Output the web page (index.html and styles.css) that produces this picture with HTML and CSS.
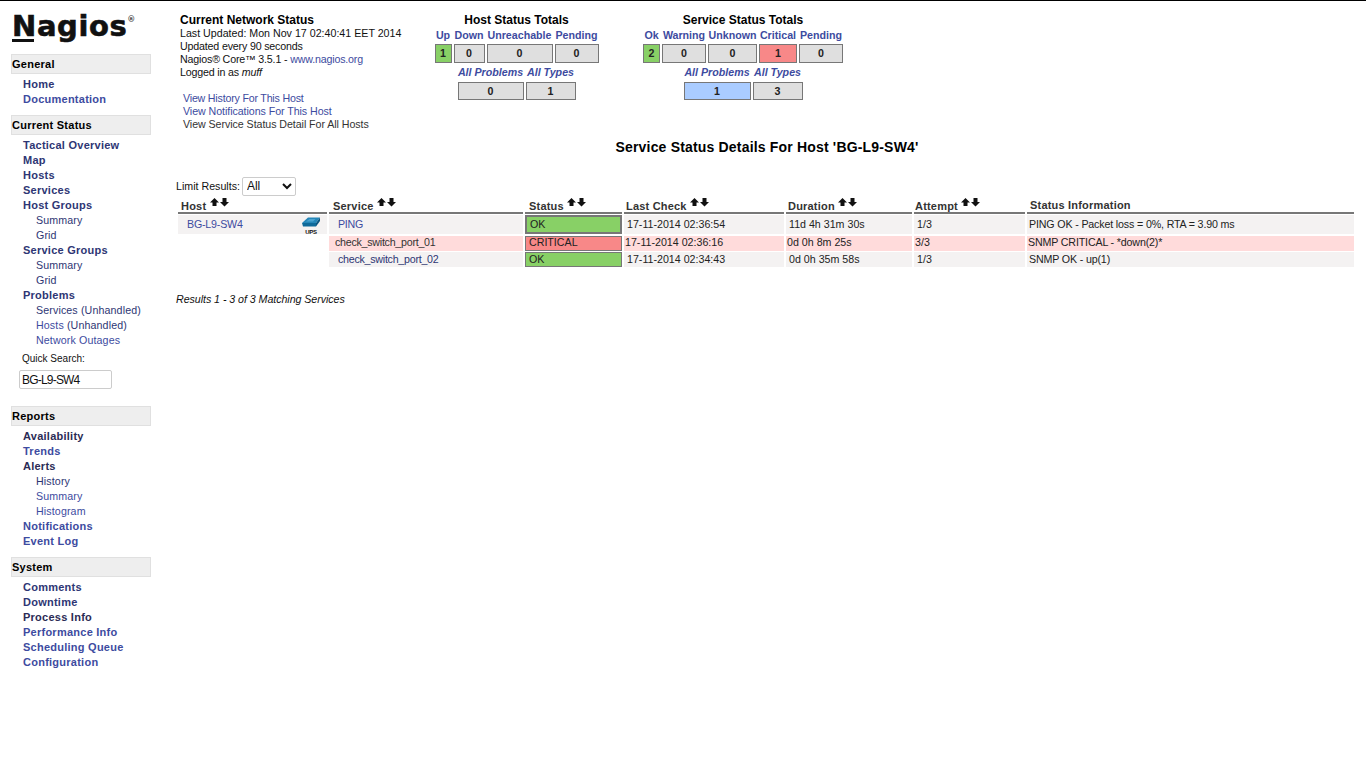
FILE: index.html
```html
<!DOCTYPE html>
<html lang="en">
<head>
  <meta charset="UTF-8">
  <title>Nagios Core</title>
  <link rel="stylesheet" href="styles.css">
</head>
<body>
  <div class="page">
    <nav class="side">
      <div class="logo"><span class="logo-n">N</span>agios<sup>®</sup></div>

      <div class="menu-head">General</div>
      <ul class="menu">
        <li><a class="seen" href="#">Home</a></li>
        <li><a href="#">Documentation</a></li>
      </ul>

      <div class="menu-head">Current Status</div>
      <ul class="menu">
        <li><a class="seen" href="#">Tactical Overview</a></li>
        <li><a class="seen" href="#">Map</a></li>
        <li><a class="seen" href="#">Hosts</a></li>
        <li><a class="seen" href="#">Services</a></li>
        <li><a class="seen" href="#">Host Groups</a></li>
        <li class="sub"><a class="seen" href="#">Summary</a></li>
        <li class="sub"><a class="seen" href="#">Grid</a></li>
        <li><a class="seen" href="#">Service Groups</a></li>
        <li class="sub"><a class="seen" href="#">Summary</a></li>
        <li class="sub"><a class="seen" href="#">Grid</a></li>
        <li><a class="seen" href="#">Problems</a></li>
        <li class="sub"><a class="seen" href="#">Services</a> <a class="seen" href="#">(Unhandled)</a></li>
        <li class="sub"><a href="#">Hosts</a> <a class="seen" href="#">(Unhandled)</a></li>
        <li class="sub"><a href="#">Network Outages</a></li>
      </ul>
      <div class="search">
        <label class="search-label" for="q">Quick Search:</label>
        <input class="search-input" id="q" type="text" value="BG-L9-SW4">
      </div>

      <div class="menu-head">Reports</div>
      <ul class="menu">
        <li><a class="dark" href="#">Availability</a></li>
        <li><a href="#">Trends</a></li>
        <li><a class="dark" href="#">Alerts</a></li>
        <li class="sub"><a class="seen" href="#">History</a></li>
        <li class="sub"><a href="#">Summary</a></li>
        <li class="sub"><a href="#">Histogram</a></li>
        <li><a href="#">Notifications</a></li>
        <li><a href="#">Event Log</a></li>
      </ul>

      <div class="menu-head">System</div>
      <ul class="menu">
        <li><a class="seen" href="#">Comments</a></li>
        <li><a class="seen" href="#">Downtime</a></li>
        <li><a class="dark" href="#">Process Info</a></li>
        <li><a href="#">Performance Info</a></li>
        <li><a href="#">Scheduling Queue</a></li>
        <li><a href="#">Configuration</a></li>
      </ul>
    </nav>

    <main class="main">
      <div class="top">
        <div class="info">
          <div class="info-title">Current Network Status</div>
          <div>Last Updated: Mon Nov 17 02:40:41 EET 2014</div>
          <div class="tight">Updated every 90 seconds</div>
          <div class="tight">Nagios® Core™ 3.5.1 - <a href="#">www.nagios.org</a></div>
          <div class="tight">Logged in as <i>muff</i></div>
          <div class="info-links">
            <div><a href="#">View History For This Host</a></div>
            <div><a href="#">View Notifications For This Host</a></div>
            <div><a class="plain" href="#">View Service Status Detail For All Hosts</a></div>
          </div>
        </div>

        <div class="totals totals-host">
          <div class="totals-title">Host Status Totals</div>
          <div class="totals-row">
            <div class="cell w17"><a href="#">Up</a><b class="num ok">1</b></div>
            <div class="cell w31"><a href="#">Down</a><b class="num">0</b></div>
            <div class="cell w66"><a href="#">Unreachable</a><b class="num">0</b></div>
            <div class="cell w44"><a href="#">Pending</a><b class="num">0</b></div>
          </div>
          <div class="totals-row totals-sum">
            <div class="cell w66"><a href="#">All Problems</a><b class="num">0</b></div>
            <div class="cell w50"><a href="#">All Types</a><b class="num">1</b></div>
          </div>
        </div>

        <div class="totals totals-service">
          <div class="totals-title">Service Status Totals</div>
          <div class="totals-row">
            <div class="cell w17"><a href="#">Ok</a><b class="num ok">2</b></div>
            <div class="cell w44"><a href="#">Warning</a><b class="num">0</b></div>
            <div class="cell w49"><a href="#">Unknown</a><b class="num">0</b></div>
            <div class="cell w38"><a href="#">Critical</a><b class="num bad">1</b></div>
            <div class="cell w44"><a href="#">Pending</a><b class="num">0</b></div>
          </div>
          <div class="totals-row totals-sum">
            <div class="cell w67"><a href="#">All Problems</a><b class="num hit">1</b></div>
            <div class="cell w50"><a href="#">All Types</a><b class="num">3</b></div>
          </div>
        </div>
      </div>

      <h1 class="page-title">Service Status Details For Host 'BG-L9-SW4'</h1>

      <div class="limit">
        <label for="limit">Limit Results:</label>
        <select class="limit-select" id="limit"><option>All</option><option>25</option><option>50</option></select>
      </div>

      <table class="status">
        <colgroup>
          <col class="c-host"><col class="c-service"><col class="c-state"><col class="c-check"><col class="c-dur"><col class="c-try"><col class="c-info">
        </colgroup>
        <thead>
          <tr>
            <th>Host <svg class="sort" viewBox="0 0 20 9"><path d="M4.5 0 9 4.5H6.5V8h-4V4.5H0z"/><path d="M12.500 0h4v4H19l-4.500 4.500L10 4h2.500z"/></svg></th>
            <th class="th-wide">Service <svg class="sort" viewBox="0 0 20 9"><path d="M4.5 0 9 4.5H6.5V8h-4V4.5H0z"/><path d="M12.500 0h4v4H19l-4.500 4.500L10 4h2.500z"/></svg></th>
            <th class="th-wide">Status <svg class="sort" viewBox="0 0 20 9"><path d="M4.5 0 9 4.5H6.5V8h-4V4.5H0z"/><path d="M12.500 0h4v4H19l-4.500 4.500L10 4h2.500z"/></svg></th>
            <th class="th-narrow">Last Check <svg class="sort" viewBox="0 0 20 9"><path d="M4.5 0 9 4.5H6.5V8h-4V4.5H0z"/><path d="M12.500 0h4v4H19l-4.500 4.500L10 4h2.500z"/></svg></th>
            <th class="th-narrow">Duration <svg class="sort" viewBox="0 0 20 9"><path d="M4.5 0 9 4.5H6.5V8h-4V4.5H0z"/><path d="M12.500 0h4v4H19l-4.500 4.500L10 4h2.500z"/></svg></th>
            <th class="th-try">Attempt <svg class="sort" viewBox="0 0 20 9"><path d="M4.5 0 9 4.5H6.5V8h-4V4.5H0z"/><path d="M12.500 0h4v4H19l-4.500 4.500L10 4h2.500z"/></svg></th>
            <th class="th-info">Status Information</th>
          </tr>
        </thead>
        <tbody>
          <tr class="row-ok row-first">
            <td class="host">
              <div class="host-inner">
                <a href="#">BG-L9-SW4</a>
                <svg class="host-icon" viewBox="0 0 18 18">
                  <path fill="#2486b8" d="M0 7 6 1.500h12L14 7z"/>
                  <path fill="#4aa3d0" d="M4 5.500 7.500 3h6L11 5.500z"/>
                  <path fill="#0f6a9a" d="M0 7h14v3.500H1z"/>
                  <path fill="#0a5580" d="M14 7l4-5.500v3.500l-4 5.500z"/>
                  <text class="host-icon-label" x="9" y="17.500" text-anchor="middle">UPS</text>
                </svg>
              </div>
            </td>
            <td class="svc"><a href="#">PING</a></td>
            <td class="state"><div class="badge badge-ok">OK</div></td>
            <td>17-11-2014 02:36:54</td>
            <td>11d 4h 31m 30s</td>
            <td>1/3</td>
            <td class="td-info">PING OK - Packet loss = 0%, RTA = 3.90 ms</td>
          </tr>
          <tr class="row-crit">
            <td class="blank"></td>
            <td class="svc"><a class="plain" href="#">check_switch_port_01</a></td>
            <td class="state"><div class="badge badge-crit">CRITICAL</div></td>
            <td>17-11-2014 02:36:16</td>
            <td>0d 0h 8m 25s</td>
            <td>3/3</td>
            <td class="td-info">SNMP CRITICAL - *down(2)*</td>
          </tr>
          <tr class="row-ok">
            <td class="blank"></td>
            <td class="svc"><a class="seen" href="#">check_switch_port_02</a></td>
            <td class="state"><div class="badge badge-ok">OK</div></td>
            <td>17-11-2014 02:34:43</td>
            <td>0d 0h 35m 58s</td>
            <td>1/3</td>
            <td class="td-info">SNMP OK - up(1)</td>
          </tr>
        </tbody>
      </table>

      <p class="results">Results 1 - 3 of 3 Matching Services</p>
    </main>
  </div>
</body>
</html>
```

FILE: styles.css
```css
html, body {
  margin: 0;
  padding: 0;
  background-color: #fff;
}

body {
  border-top: 1px solid #000;
  font-family: "Liberation Sans", Arial, sans-serif;
  font-size: 10.67px;
  color: #111;
}

a {
  color: #3d4ba0;
  text-decoration: none;
}

a.seen {
  color: #2e3674;
}

a.dark {
  color: #2b2b55;
}

a.plain {
  color: #333;
}

.page {
  display: flex;
  align-items: flex-start;
}

/* left menu */
.side {
  width: 176px;
  flex-shrink: 0;
  padding-left: 11px;
  box-sizing: border-box;
}

.logo {
  height: 53px;
  box-sizing: border-box;
  padding: 8px 0 0 1px;
  font-family: "DejaVu Sans", sans-serif;
  font-weight: bold;
  font-size: 29px;
  line-height: 34px;
  letter-spacing: 0.6px;
  color: #111;
  -webkit-text-stroke: 0.6px #111;
}

.logo-n {
  position: relative;
}

.logo-n::after {
  content: "";
  position: absolute;
  left: 0;
  top: 30px;
  width: 22px;
  height: 3px;
  background-color: #111;
}

.logo sup {
  font-size: 8px;
  line-height: 0;
  vertical-align: 14px;
  letter-spacing: 0;
  color: #444;
  -webkit-text-stroke: 0;
}

.menu-head {
  width: 140px;
  height: 20px;
  box-sizing: border-box;
  background-color: #eee;
  border: 1px solid #e0e0e0;
  font-weight: bold;
  font-size: 11px;
  line-height: 18px;
  letter-spacing: 0.25px;
  color: #000;
}

.menu {
  list-style: none;
  margin: 3px 0 8px;
  padding: 0 0 0 12px;
  font-weight: bold;
  font-size: 11px;
  line-height: 15px;
  letter-spacing: 0.25px;
}

.menu .sub {
  padding-left: 13px;
  font-weight: normal;
  font-size: 10.67px;
  letter-spacing: 0.12px;
}

.search {
  margin: -5px 0 17px 8px;
}

.search-label {
  display: block;
  padding-left: 3px;
  line-height: 15px;
  font-size: 10px;
  color: #111;
}

.search-input {
  display: block;
  width: 93px;
  height: 19px;
  margin: 4px 0 0 0;
  padding: 0 2px;
  box-sizing: border-box;
  border: 1px solid #ccc;
  border-radius: 2px;
  font-family: "Liberation Sans", Arial, sans-serif;
  font-size: 12px;
  letter-spacing: -0.8px;
  color: #111;
}

/* main area */
.main {
  width: 1180px;
}

.top {
  display: flex;
  align-items: flex-start;
  height: 135px;
}

.info {
  width: 258px;
  box-sizing: border-box;
  padding: 12px 0 0 4px;
  line-height: 13px;
}

.tight {
  letter-spacing: -0.17px;
}

.info-title {
  font-weight: bold;
  font-size: 12px;
  line-height: 14px;
  color: #000;
}

.info-links {
  margin: 13px 0 0 3px;
  letter-spacing: -0.06px;
}

.info-links div:first-child {
  letter-spacing: -0.2px;
}

.totals {
  padding-top: 12px;
}

.totals-host {
  width: 165px;
}

.totals-service {
  width: 202px;
  margin-left: 43px;
}

.totals-title {
  text-align: center;
  font-weight: bold;
  font-size: 12px;
  line-height: 14px;
  color: #000;
}

.totals-row {
  display: flex;
  justify-content: center;
  gap: 2px;
  margin-top: 2px;
}

.totals-sum {
  margin-top: 3px;
}

.totals-sum .cell a {
  font-style: italic;
}

.cell {
  display: flex;
  flex-direction: column;
  align-items: center;
}

.cell a {
  font-weight: bold;
  font-size: 10.67px;
  line-height: 13px;
  white-space: nowrap;
}

.num {
  display: block;
  width: 100%;
  height: 19px;
  margin-top: 2px;
  box-sizing: border-box;
  background-color: #dfdfdf;
  border: 1px solid #777;
  text-align: center;
  font-size: 10.67px;
  line-height: 17px;
  color: #222;
}

.totals-sum .num {
  margin-top: 3px;
  height: 18px;
  line-height: 16px;
}

.num.ok { background-color: #88d066; }
.num.bad { background-color: #f88888; }
.num.hit { background-color: #aaccff; }

.w17 { width: 17px; }
.w31 { width: 31px; }
.w38 { width: 38px; }
.w44 { width: 44px; }
.w49 { width: 49px; }
.w50 { width: 50px; }
.w66 { width: 66px; }
.w67 { width: 67px; }

.page-title {
  margin: 0;
  height: 26px;
  text-align: center;
  width: 1182px;
  font-size: 14px;
  line-height: 22px;
  letter-spacing: 0.18px;
  color: #000;
}

.limit {
  display: flex;
  align-items: center;
  gap: 2px;
  height: 20px;
  margin-top: 14px;
  color: #111;
}

.limit-select {
  width: 54px;
  height: 19px;
  padding: 0;
  border: 1px solid #ccc;
  border-radius: 2px;
  background-color: #fff;
  font-family: "Liberation Sans", Arial, sans-serif;
  font-size: 12px;
  color: #111;
}

/* status table */
.status {
  table-layout: fixed;
  width: 1180px;
  border-collapse: separate;
  border-spacing: 2px 1px;
  margin-top: 1px;
}

.c-host { width: 149px; }
.c-service { width: 194px; }
.c-state { width: 97px; }
.c-check { width: 160px; }
.c-dur { width: 126px; }
.c-try { width: 111px; }
.c-info { width: 327px; }

.status th {
  height: 12px;
  padding: 2px 0 0 3px;
  border-bottom: 2px solid #777;
  text-align: left;
  vertical-align: top;
  font-size: 11px;
  line-height: 12px;
  letter-spacing: 0.2px;
  color: #333;
}

.status th.th-wide {
  padding-left: 4px;
}

.status th.th-narrow {
  padding-left: 2px;
}

.status th.th-try {
  padding-left: 1px;
}

.status th.th-info {
  padding-top: 1px;
}

.sort {
  width: 20px;
  height: 9px;
  vertical-align: 3px;
  margin-top: -6px;
  fill: #111;
}

.status td {
  padding: 0 0 0 3px;
  height: 15px;
  line-height: 15px;
  letter-spacing: 0;
  color: #222;
  white-space: nowrap;
}

.row-first td {
  height: 19px;
}

.row-ok td {
  background-color: #f4f2f2;
}

.row-crit td {
  background-color: #ffdbdb;
  padding-left: 1px;
  border-top: 1px solid #fff;
  line-height: 13px;
  vertical-align: top;
}

.status td.blank {
  background-color: transparent;
  border-top: 0;
}

.status td.state {
  padding: 0;
  background-color: transparent;
  border-top: 0;
  vertical-align: bottom;
}

.status td.svc {
  padding-left: 9px;
  letter-spacing: -0.25px;
}

.status .row-crit td.svc {
  padding-left: 6px;
}

.status td.td-info {
  padding-left: 2px;
  letter-spacing: -0.15px;
}

.status .row-crit td.td-info {
  padding-left: 1px;
}

.status td.host {
  padding: 0 7px 0 9px;
  letter-spacing: -0.2px;
}

.host-inner {
  display: flex;
  justify-content: space-between;
  align-items: center;
}

.host-icon {
  width: 18px;
  height: 18px;
}

.host-icon-label {
  font-family: "Liberation Sans", Arial, sans-serif;
  font-size: 6px;
  font-weight: bold;
  letter-spacing: -0.3px;
  fill: #111;
}

.badge {
  box-sizing: border-box;
  padding-left: 3px;
  border: 1px solid #777;
  color: #222;
}

.row-first .badge {
  height: 19px;
  line-height: 15px;
  border-width: 2px;
}

.row-crit .badge,
.row-ok:not(.row-first) .badge {
  height: 15px;
  line-height: 13px;
}

.row-crit .badge {
  line-height: 11px;
}

.badge-ok { background-color: #88d066; }
.badge-crit { background-color: #f88888; }

.results {
  margin: 25px 0 0 0;
  font-style: italic;
  line-height: 13px;
  letter-spacing: -0.05px;
  color: #111;
}
```
